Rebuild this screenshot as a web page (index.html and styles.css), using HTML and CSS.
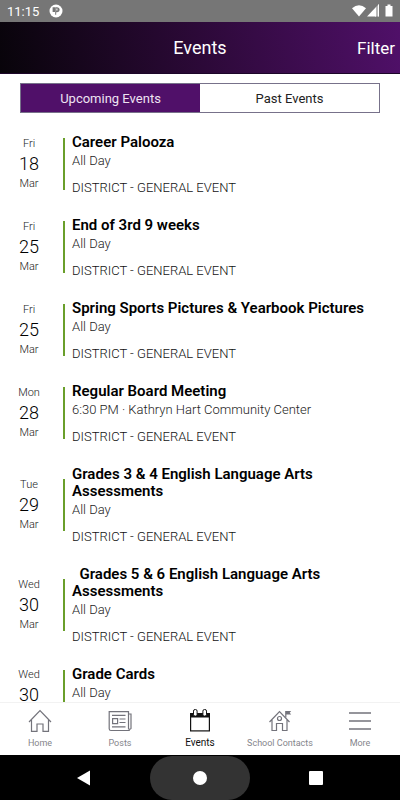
FILE: index.html
```html
<!DOCTYPE html>
<html lang="en">
<head>
<meta charset="utf-8">
<meta name="viewport" content="width=device-width, initial-scale=1">
<title>Events</title>
<link rel="stylesheet" href="styles.css">
</head>
<body>
<div class="status">
  <span class="clock">11:15</span>
  <svg class="status-app" width="14" height="14" viewBox="0 0 14 14"><circle cx="7" cy="7" r="6.500" fill="#fff"/><path d="M3.600 3.200h2.400v4.800H3.600zM7.200 3.200h1a2.500 2.500 0 0 1 0 5h-1v2.500H6.200V3.200z" fill="#767676"/><path d="M7.400 4.600h1v2h-1z" fill="#fff"/></svg>
  <svg class="status-icons" width="42" height="14" viewBox="0 0 42 14" fill="#fff"><path d="M0 4.200Q7 -1.500 14 4.200L7 12.500z"/><path d="M15 12.500L24 3v9.500z"/><path d="M24 3l3-3v12.500h-3z" fill="#b9b9b9"/><path d="M24 4v8.500h-1V5zM26 1l1-1v12.500h-1z"/><path d="M33.500 2h2V.5h3V2h2v10.500h-7z"/></svg>
</div>
<header class="header">
  <h1>Events</h1>
  <button class="filter" type="button">Filter</button>
</header>
<div class="tabs">
  <button class="tab tab-on" type="button">Upcoming Events</button>
  <button class="tab" type="button">Past Events</button>
</div>
<main class="list">
  <article class="event">
    <div class="date"><span>Fri</span><b>18</b><span>Mar</span></div>
    <div class="bar"></div>
    <div class="info"><h2>Career Palooza</h2><p class="when">All Day</p><p class="group">DISTRICT - GENERAL EVENT</p></div>
  </article>
  <article class="event">
    <div class="date"><span>Fri</span><b>25</b><span>Mar</span></div>
    <div class="bar"></div>
    <div class="info"><h2>End of 3rd 9 weeks</h2><p class="when">All Day</p><p class="group">DISTRICT - GENERAL EVENT</p></div>
  </article>
  <article class="event">
    <div class="date"><span>Fri</span><b>25</b><span>Mar</span></div>
    <div class="bar"></div>
    <div class="info"><h2>Spring Sports Pictures &amp; Yearbook Pictures</h2><p class="when">All Day</p><p class="group">DISTRICT - GENERAL EVENT</p></div>
  </article>
  <article class="event">
    <div class="date"><span>Mon</span><b>28</b><span>Mar</span></div>
    <div class="bar"></div>
    <div class="info"><h2>Regular Board Meeting</h2><p class="when">6:30 PM · Kathryn Hart Community Center</p><p class="group">DISTRICT - GENERAL EVENT</p></div>
  </article>
  <article class="event">
    <div class="date"><span>Tue</span><b>29</b><span>Mar</span></div>
    <div class="bar"></div>
    <div class="info"><h2>Grades 3 &amp; 4 English Language Arts Assessments</h2><p class="when">All Day</p><p class="group">DISTRICT - GENERAL EVENT</p></div>
  </article>
  <article class="event">
    <div class="date"><span>Wed</span><b>30</b><span>Mar</span></div>
    <div class="bar"></div>
    <div class="info"><h2>&nbsp; Grades 5 &amp; 6 English Language Arts Assessments</h2><p class="when">All Day</p><p class="group">DISTRICT - GENERAL EVENT</p></div>
  </article>
  <article class="event">
    <div class="date"><span>Wed</span><b>30</b></div>
    <div class="bar"></div>
    <div class="info"><h2>Grade Cards</h2><p class="when">All Day</p></div>
  </article>
</main>
<nav class="nav">
  <a href="#home"><svg width="24" height="24" viewBox="0 0 24 24" fill="none" stroke="#73737b" stroke-width="1.200"><path d="M1 13L12 1.500 23 13M3.500 11v11.400h5.500V15h6v7.400h5.500V11"/></svg><span>Home</span></a>
  <a href="#posts"><svg width="24" height="24" viewBox="0 0 24 24" fill="none" stroke="#73737b" stroke-width="1.200"><path d="M20.500 21.500H3A1.800 1.800 0 0 1 1.200 19.700V2.700H20.500V19.500a1.400 1.400 0 0 0 2.500 0V5h-2.500M21.800 21.400h-2"/><path d="M4 6.300h13.500M11.500 10h6M11.500 13.500h6M4 17.800h13.500"/><path d="M4.600 9.600h5v5h-5z"/></svg><span>Posts</span></a>
  <a class="active" href="#events"><svg width="24" height="24" viewBox="0 0 24 24"><path d="M2 4h20V22.500H2z" fill="#111"/><path d="M3.200 8.500h17.600v12.800H3.200z" fill="#fff"/><rect x="5.500" y=".5" width="3.600" height="6.600" rx="1.600" fill="#fff" stroke="#111"/><rect x="14.900" y=".5" width="3.600" height="6.600" rx="1.600" fill="#fff" stroke="#111"/></svg><span>Events</span></a>
  <a href="#contacts"><svg width="24" height="24" viewBox="0 0 24 24" fill="none" stroke="#73737b" stroke-width="1.200"><path d="M1.500 13L11.500 2.500 21.500 13M4 11v10.500h4.500V14.500h6v7H19V11"/><circle cx="11.500" cy="9.500" r="2"/><path d="M17.800 8.500V2"/><path d="M17.800 2h5.400l-1.500 1.800 1.500 1.800h-5.400z" fill="#73737b" stroke="none"/></svg><span>School Contacts</span></a>
  <a href="#more"><svg width="24" height="24" viewBox="0 0 24 24" stroke="#73737b" stroke-width="1.500"><path d="M1 4h22M1 12h22M1 20h22"/></svg><span>More</span></a>
</nav>
<div class="system">
  <button type="button" aria-label="Back"><svg width="16" height="16" viewBox="0 0 16 16"><path d="M1 8L14 .5v15z" fill="#fff"/></svg></button>
  <button class="pill" type="button" aria-label="Home screen"><svg width="16" height="16" viewBox="0 0 16 16"><circle cx="8" cy="8" r="7" fill="#fff"/></svg></button>
  <button type="button" aria-label="Recent apps"><svg width="16" height="16" viewBox="0 0 16 16"><rect x="1" y="1" width="14" height="14" rx="1" fill="#fff"/></svg></button>
</div>
</body>
</html>
```
FILE: styles.css
```css
* { box-sizing: border-box; margin: 0; padding: 0; }
body {
  display: flex;
  flex-direction: column;
  height: 100vh;
  overflow: hidden;
  background: #fff;
  font-family: Roboto, "Liberation Sans", sans-serif;
  color: #000;
}
button { border: 0; background: none; font: inherit; color: inherit; }
svg { display: block; }
.status {
  display: flex;
  flex: none;
  align-items: center;
  height: 22px;
  padding: 0 6px 0 7px;
  background: #767676;
  color: #fff;
  font-size: 13px;
}
.status-app { margin-left: 10px; }
.status-icons { margin-left: auto; }
.header {
  display: grid;
  flex: none;
  grid-template-columns: 1fr auto 1fr;
  align-items: center;
  height: 52px;
  padding: 0 5px;
  background: linear-gradient(80deg, #08040a, #2c0938 50%, #501069);
  border-bottom: 1px solid #1c0529;
  color: #fff;
}
.header h1 { grid-column: 2; font-size: 18px; font-weight: 400; }
.filter { justify-self: end; font-size: 17px; }
.tabs {
  display: flex;
  flex: none;
  height: 30px;
  margin: 9px 20px 0;
  border: 1px solid #77718a;
}
.tab { flex: 1 1 0; font-size: 13px; color: #222; }
.tab-on { background: #501069; color: #eee3f2; }
.list {
  display: flex;
  flex: 1;
  flex-direction: column;
  gap: 21px;
  min-height: 0;
  padding-top: 21px;
  overflow: hidden;
}
.event {
  display: grid;
  flex: none;
  grid-template-columns: 58px 2px 1fr;
  align-items: center;
  column-gap: 5px;
  min-height: 62px;
}
.event:last-child { align-items: start; }
.event:last-child .bar { margin-top: 4px; }
.date {
  display: flex;
  flex-direction: column;
  align-items: center;
  padding-bottom: 2px;
  font-size: 11px;
  font-weight: 300;
  line-height: 18px;
  color: #222;
}
.date b { font-size: 18px; font-weight: 300; line-height: 22px; color: #000; }
.bar { width: 2px; height: 52px; margin-bottom: 2px; background: #6a9f2b; }
.info { padding: 0 12px 0 2px; }
.info h2 { font-size: 15px; font-weight: 600; line-height: 17px; }
.when { font-size: 13px; font-weight: 300; line-height: 19px; color: #222; }
.group { margin-top: 10px; font-size: 13px; font-weight: 300; line-height: 16px; color: #111; }
.nav {
  display: grid;
  flex: none;
  grid-template-columns: repeat(5, 1fr);
  height: 53px;
  padding-top: 6px;
  border-top: 1px solid #f2f2f2;
  background: #fff;
}
.nav a {
  display: flex;
  flex-direction: column;
  align-items: center;
  gap: 4px;
  color: #85858b;
  font-size: 9px;
  line-height: 12px;
  text-decoration: none;
  white-space: nowrap;
}
.nav .active { color: #111; font-size: 10px; }
.system {
  display: flex;
  flex: none;
  justify-content: center;
  gap: 16px;
  height: 45px;
  padding-top: 1px;
  background: #000;
}
.system button {
  display: flex;
  align-items: center;
  justify-content: center;
  width: 25%;
}
.system .pill { border-radius: 22px; background: #333; }
```
